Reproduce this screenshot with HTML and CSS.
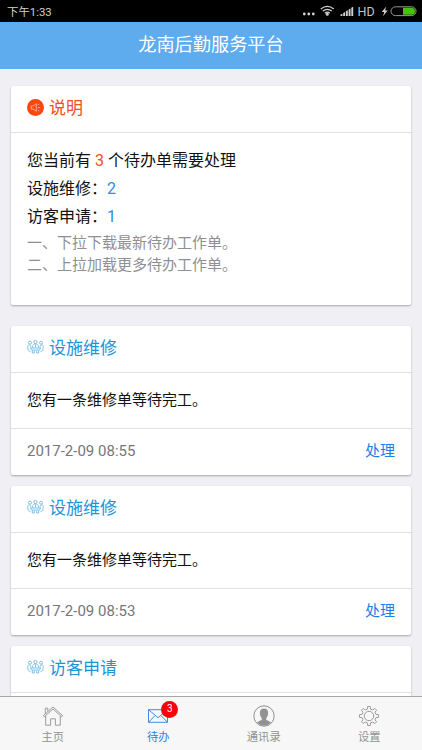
FILE: index.html
```html
<!DOCTYPE html>
<html lang="zh-CN">
<head>
  <meta charset="UTF-8" />
  <meta name="viewport" content="width=device-width, initial-scale=1.0" />
  <title>龙南后勤服务平台</title>
  <link rel="stylesheet" href="styles.css">
</head>
<body>

  <!-- icone condivise -->
  <svg class="defs" width="0" height="0">
    <symbol id="people" viewBox="0 0 17 14">
      <g fill="none" stroke="currentColor" stroke-width="0.8">
        <circle cx="3" cy="2.7" r="1.5"/>
        <circle cx="8.5" cy="2" r="1.6"/>
        <circle cx="14" cy="2.7" r="1.5"/>
        <path d="M3.8 7.5V6.2C3.8 5 2.8 4.7 2 4.9 0.9 5.2 0.6 6 0.7 7.2L1.2 10.4 3.6 11.8M13.2 7.5V6.2C13.2 5 14.2 4.7 15 4.9 16.1 5.2 16.4 6 16.3 7.2L15.8 10.4 13.4 11.8"/>
        <path d="M5.7 7.8V5.8C5.7 4.5 7 4 8.5 4S11.3 4.5 11.3 5.8V7.8M3.4 8H13.6L12.5 10H4.5ZM5.3 10V13H7.3V10.5M9.7 10.5V13H11.7V10M8.5 4.5V7.5"/>
      </g>
    </symbol>
  </svg>

  <div class="status">
    <span>下午1:33</span>
    <div class="status-icons">
      <svg width="122" height="22" viewBox="0 0 122 22">
        <g fill="#d0d0d0">
          <circle cx="4.3" cy="14" r="1.4"/>
          <circle cx="8.8" cy="14" r="1.4"/>
          <circle cx="13.3" cy="14" r="1.4"/>
          <circle cx="27.3" cy="14.3" r="1.5"/>
          <path d="M40.500 16v-1.600l1.900-.7v2.300zM43.200 16v-3l1.900-1v4zM45.900 16v-4.800l1.900-1v5.800zM48.600 16v-6.500l1.900-1v7.500zM51.300 16v-8.300l1.900-.9v9.200z"/>
          <path d="M86.300 6.500L81.700 12h2.600l-1.300 4.200 4.700-5.700h-2.600z"/>
        </g>
        <g fill="none" stroke="#d0d0d0" stroke-width="1.3">
          <path d="M20.800 8.900q6.500-5 13 0M22.800 11.100q4.500-3.500 9 0M24.800 13.200q2.500-2 5 0"/>
          <rect x="91" y="6.800" width="25" height="8.800" rx="4.400" stroke="#999" stroke-width="1"/>
        </g>
        <path d="M103 7.700h8.500a3.500 3.500 0 0 1 0 7H103z" fill="#45c20a"/>
        <text x="57.5" y="16" class="hd">HD</text>
      </svg>
    </div>
  </div>

  <header>龙南后勤服务平台</header>

  <main>
    <div class="card info">
      <div class="card-header red">
        <svg width="17" height="17" viewBox="0 0 17 17">
          <circle cx="8.5" cy="8.5" r="8.5" fill="#f8480c"/>
          <path d="M4.2 7h1.9l3.2-2.3v7.6L6.1 10H4.2zM10.8 6l1.5-1M11 8.5h2M10.8 11l1.5 1" fill="none" stroke="#ffc3ad" stroke-width="0.8"/>
        </svg>
        <span>说明</span>
      </div>
      <div class="card-content">
        <p>您当前有 <span class="num-red">3</span> 个待办单需要处理</p>
        <p>设施维修：<span class="num">2</span></p>
        <p>访客申请：<span class="num">1</span></p>
        <p class="note">一、下拉下载最新待办工作单。</p>
        <p class="note">二、上拉加载更多待办工作单。</p>
      </div>
    </div>

    <div class="card">
      <div class="card-header">
        <svg width="17" height="14"><use href="#people"/></svg>
        <span>设施维修</span>
      </div>
      <div class="card-content">您有一条维修单等待完工。</div>
      <div class="card-footer">
        <span>2017-2-09 08:55</span>
        <a>处理</a>
      </div>
    </div>

    <div class="card">
      <div class="card-header">
        <svg width="17" height="14"><use href="#people"/></svg>
        <span>设施维修</span>
      </div>
      <div class="card-content">您有一条维修单等待完工。</div>
      <div class="card-footer">
        <span>2017-2-09 08:53</span>
        <a>处理</a>
      </div>
    </div>

    <div class="card">
      <div class="card-header">
        <svg width="17" height="14"><use href="#people"/></svg>
        <span>访客申请</span>
      </div>
      <div class="card-content"></div>
    </div>
  </main>

  <nav>
    <div class="tab">
      <svg width="22" height="22" viewBox="0 0 22 22">
        <path d="M1.3 10.7L11 2l9.7 8.7-1 1.1L11 4 2.3 11.8zM3.3 9V3.2h2.5v3.2M3.7 11v9.2H8.6v-6.4h4.8v6.4h4.9V11" fill="none" stroke="#929292" stroke-width="0.9"/>
      </svg>
      <span>主页</span>
    </div>
    <div class="tab active">
      <svg width="22" height="22" viewBox="0 0 22 22">
        <path d="M1.5 4.700h19v12.600h-19zM1.500 4.700L11 12.700l9.500-8M1.500 17.300l6.300-6.600M20.500 17.300l-6.300-6.600" fill="none" stroke="#2c7fdc" stroke-width="0.9"/>
      </svg>
      <span>待办</span>
      <b class="badge">3</b>
    </div>
    <div class="tab">
      <svg width="22" height="22" viewBox="0 0 22 22">
        <circle cx="11" cy="11" r="10.200" fill="none" stroke="#858585" stroke-width="0.9"/>
        <path d="M11 3.600c2.800 0 4.200 1.700 4.100 4.300 0 2.300-.6 3.800-1.800 5v2.200c1.400.9 3.400 1.200 4.600 2.400A9.600 9.600 0 0 1 11 20.800a9.600 9.600 0 0 1-6.900-3.300c1.200-1.200 3.200-1.500 4.600-2.400v-2.200c-1.200-1.200-1.800-2.700-1.800-5C6.800 5.300 8.200 3.600 11 3.600z" fill="#929292"/>
      </svg>
      <span>通讯录</span>
    </div>
    <div class="tab">
      <svg width="22" height="22" viewBox="0 0 22 22">
        <g fill="none" stroke="#929292" stroke-width="0.9" stroke-linejoin="round">
          <circle cx="11" cy="11" r="4.7"/>
          <path d="M9.4 4.1L9.7 1.5H12.3L12.6 4.1L14.8 5L16.8 3.4L18.6 5.2L17 7.2L17.9 9.4L20.5 9.7V12.3L17.9 12.6L17 14.8L18.6 16.8L16.8 18.6L14.8 17L12.6 17.9L12.3 20.5H9.7L9.4 17.9L7.2 17L5.2 18.6L3.4 16.8L5 14.8L4.1 12.6L1.5 12.3V9.7L4.1 9.4L5 7.2L3.4 5.2L5.2 3.4L7.2 5Z"/>
        </g>
      </svg>
      <span>设置</span>
    </div>
  </nav>

</body>
</html>
```
FILE: styles.css
```css
* {
  box-sizing: border-box;
}

body {
  margin: 0;
  height: 750px;
  display: flex;
  flex-direction: column;
  overflow: hidden;
  background: #efeff4;
  font-family: Roboto, "Noto Sans CJK SC", sans-serif;
  color: #111;
}

.defs {
  position: absolute;
}

.status {
  flex: none;
  height: 22px;
  background: #000;
  color: #d0d0d0;
  font-size: 11.4px;
  line-height: 24px;
  padding-left: 7px;
  display: flex;
  justify-content: space-between;
}

.status-icons svg {
  display: block;
}

.hd {
  font-size: 12.5px;
  fill: #c4c4c4;
}

header {
  flex: none;
  height: 47px;
  background: #5eabee;
  color: white;
  font-size: 18.2px;
  line-height: 45px;
  text-align: center;
}

main {
  flex: 1;
  min-height: 0;
  overflow: hidden;
  padding: 17px 11px 0;
}

.card {
  background: white;
  border-radius: 2px;
  box-shadow: 0 1px 2px rgba(0, 0, 0, 0.3);
  margin-bottom: 11px;
}

.card-header {
  height: 47px;
  padding: 0 16px 4px;
  display: flex;
  align-items: center;
  gap: 5px;
  font-size: 17px;
  color: #1d92d8;
  border-bottom: 1px solid #dfdfe2;
}

.card-header svg {
  color: #65b5e6;
}

.card-header span {
  margin-top: -1px;
}

.card-header.red {
  color: #f04e1c;
}

.card-content {
  height: 55px;
  padding: 0 16px;
  font-size: 15px;
  line-height: 55px;
}

.info {
  height: 219px;
  margin-bottom: 21px;
}

.info .card-content {
  height: auto;
  padding-top: 14px;
  font-size: 16px;
  line-height: 28px;
}

.info p {
  margin: 0;
}

.info .note {
  font-size: 15px;
  line-height: 22px;
  color: #8f8f94;
  position: relative;
  top: 1px;
}

.num-red {
  color: #f04e1c;
}

.num {
  color: #2b8cf0;
}

.card-footer {
  height: 47px;
  padding: 0 16px;
  display: flex;
  justify-content: space-between;
  font-size: 15px;
  line-height: 44px;
  color: #76767a;
  border-top: 1px solid #dfdfe2;
}

.card-footer a {
  color: #1b7fe6;
}

nav {
  flex: none;
  height: 54px;
  background: #f7f7f7;
  border-top: 1px solid #a6a6aa;
  display: flex;
}

.tab {
  flex: 1;
  display: flex;
  flex-direction: column;
  align-items: center;
  padding-top: 8px;
  position: relative;
  font-size: 11.3px;
  line-height: 22px;
  color: #929292;
}

.tab svg {
  display: block;
}

.active {
  color: #2c7fdc;
}

.badge {
  position: absolute;
  top: 4px;
  left: calc(50% + 3px);
  width: 17px;
  height: 17px;
  border-radius: 50%;
  background: #fb0008;
  color: white;
  font-size: 10px;
  font-weight: normal;
  line-height: 16px;
  text-align: center;
}
```
